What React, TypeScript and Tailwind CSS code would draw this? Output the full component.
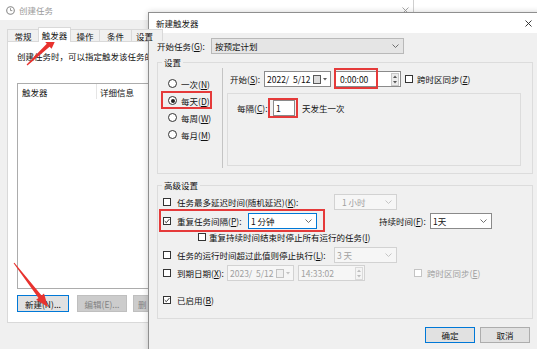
import React from "react";

function U({ children }: { children: React.ReactNode }) {
  return <span className="underline underline-offset-[1px]">{children}</span>;
}

function Check({ checked = false, disabled = false }: { checked?: boolean; disabled?: boolean }) {
  return (
    <span
      className={`relative block w-[8px] h-[8px] shrink-0 border bg-white ${
        disabled ? "border-[#c4c4c4]" : "border-[#333333]"
      }`}
    >
      {checked && (
        <svg className="absolute left-0 top-0" width="6" height="6" viewBox="0 0 6 6">
          <path d="M0.7 3.1 L2.3 4.7 L5.4 1.1" stroke="#222" strokeWidth="0.9" fill="none" />
        </svg>
      )}
    </span>
  );
}

function Radio({ checked = false }: { checked?: boolean }) {
  return (
    <span className="flex w-[9px] h-[9px] shrink-0 rounded-full border border-[#333333] bg-white items-center justify-center">
      {checked && <span className="block w-[4px] h-[4px] rounded-full bg-[#222]" />}
    </span>
  );
}

function Chevron({ color = "#606060" }: { color?: string }) {
  return (
    <svg width="7" height="4" viewBox="0 0 7 4" className="shrink-0">
      <path d="M0.5 0.5 L3.5 3.5 L6.5 0.5" stroke={color} strokeWidth="0.9" fill="none" />
    </svg>
  );
}

function CalIcon({ disabled = false }: { disabled?: boolean }) {
  const s = disabled ? "#c2c2c2" : "#5a5a5a";
  return (
    <svg width="15" height="9" viewBox="0 0 15 9" className="shrink-0">
      <rect x="0.5" y="0.5" width="7" height="8" fill={disabled ? "#f0f0f0" : "#dcdcdc"} stroke={s} />
      <path d="M10 3 L14 3 L12 5.5 Z" fill={s} />
    </svg>
  );
}

function Spinner({ disabled = false }: { disabled?: boolean }) {
  const s = disabled ? "#bdbdbd" : "#555";
  return (
    <svg width="8" height="13" viewBox="0 0 8 13" className="shrink-0">
      <rect x="0.5" y="0.5" width="7" height="12" fill={disabled ? "#f4f4f4" : "#ececec"} stroke={disabled ? "#dadada" : "#c8c8c8"} />
      <path d="M2 5 L6 5 L4 2.5 Z" fill={s} />
      <path d="M2 8 L6 8 L4 10.5 Z" fill={s} />
    </svg>
  );
}

function RedBox({ className }: { className: string }) {
  return <span className={`absolute border-2 border-[#e53a3a] pointer-events-none ${className}`} />;
}

function BackgroundWindow() {
  return (
    <div className="flex flex-col h-full">
      <div className="h-[20px] bg-white flex shrink-0">
        <div className="w-[414px] h-full border-r border-[#cfcfcf] flex items-center pl-[6px]">
          <svg width="9" height="9" viewBox="0 0 9 9">
            <circle cx="4.5" cy="4.5" r="3.8" fill="#fff" stroke="#8a8a8a" strokeWidth="1.1" />
            <path d="M4.5 2.2 L4.5 4.6 L6.3 4.6" stroke="#8a8a8a" strokeWidth="0.9" fill="none" />
          </svg>
          <span className="ml-[4px] text-[#9b9b9b]">创建任务</span>
          <svg width="7" height="7" viewBox="0 0 7 7" className="ml-auto mr-[4px]">
            <path d="M0.5 0.5 L6.5 6.5 M6.5 0.5 L0.5 6.5" stroke="#9b9b9b" strokeWidth="0.9" />
          </svg>
        </div>
      </div>
      <div className="flex-1 pl-[7px] pt-[7px]">
        <div className="relative z-10 flex items-end h-[15px]">
          <div className="w-[31px] h-[12px] mb-[1px] border-t border-l border-[#d9d9d9] bg-[#f0f0f0] flex items-center justify-center">常规</div>
          <div className="w-[33px] h-[15px] border-t border-l border-r border-[#d9d9d9] bg-white flex items-start pt-[1px] justify-center">触发器</div>
          <div className="w-[29px] h-[12px] mb-[1px] border-t border-r border-[#d9d9d9] bg-[#f0f0f0] flex items-center justify-center">操作</div>
          <div className="w-[32px] h-[12px] mb-[1px] border-t border-r border-[#d9d9d9] bg-[#f0f0f0] flex items-center justify-center">条件</div>
          <div className="w-[31px] h-[12px] mb-[1px] border-t border-r border-[#d9d9d9] bg-[#f0f0f0] flex items-center justify-start pl-[4px] overflow-hidden">设置</div>
        </div>
        <div className="-mt-[1px] w-[400px] h-[282px] bg-white border border-[#d9d9d9] pl-[9px] pt-[8px] flex flex-col">
          <div className="w-[131px] overflow-hidden whitespace-nowrap">创建任务时，可以指定触发该任务的条件。</div>
          <div className="mt-[21px] w-[380px] h-[206px] border border-[#acacac] bg-white">
            <div className="flex h-[15px]">
              <div className="w-[79px] border-r border-[#e5e5e5] pl-[4px] flex items-center">触发器</div>
              <div className="pl-[3px] flex items-center">详细信息</div>
            </div>
          </div>
          <div className="mt-[6px] flex">
            <div className="w-[52px] h-[17px] border border-[#0078d7] bg-[#e1e1e1] flex items-center justify-center">新建(N)...</div>
            <div className="ml-[8px] w-[50px] h-[17px] border border-[#bfbfbf] bg-[#cccccc] text-[#838383] flex items-center justify-center">编辑(E)...</div>
            <div className="ml-[6px] w-[16px] h-[17px] border-t border-b border-l border-[#bfbfbf] bg-[#cccccc] text-[#838383] flex items-center pl-[4px] overflow-hidden">删</div>
          </div>
        </div>
      </div>
    </div>
  );
}

function Dialog() {
  return (
    <div className="absolute left-[148px] top-[12px] w-[393px] h-[345px] border border-[#8f8f8f] bg-[#f0f0f0] shadow-[0_0_6px_rgba(0,0,0,0.18)] flex flex-col">
      <div className="h-[20px] bg-white flex items-center pl-[7px] shrink-0">
        <span>新建触发器</span>
        <span className="ml-auto w-[24px] flex items-center justify-center">
          <svg width="7" height="7" viewBox="0 0 7 7">
            <path d="M0.5 0.5 L6.5 6.5 M6.5 0.5 L0.5 6.5" stroke="#222" strokeWidth="0.9" />
          </svg>
        </span>
      </div>
      <div className="pl-[8px] pr-[7px] flex flex-col">
        <div className="mt-[5px] h-[16px] flex items-center">
          <span className="w-[54px] whitespace-nowrap">开始任务(<U>G</U>):</span>
          <div className="w-[193px] h-[16px] border border-[#b9b9b9] bg-[#e5e5e5] flex items-center pl-[3px] pr-[4px]">
            <span className="flex-1">按预定计划</span>
            <Chevron />
          </div>
        </div>

        <fieldset className="mt-[3px] w-[376px] border border-[#dcdcdc]">
          <legend className="ml-[4px] px-[2px] leading-[10px]">设置</legend>
          <div className="mt-[1px] mb-[5px] h-[100px] flex">
            <div className="w-[64px] pt-[7px] flex flex-col">
              <div className="h-[17px] flex items-center pl-[10px]">
                <Radio />
                <span className="ml-[4px]">一次(<U>N</U>)</span>
              </div>
              <div className="relative h-[17px] flex items-center pl-[10px]">
                <Radio checked />
                <span className="ml-[4px]">每天(<U>D</U>)</span>
                <RedBox className="left-[3px] -top-[1px] w-[51px] h-[18px]" />
              </div>
              <div className="h-[17px] flex items-center pl-[10px]">
                <Radio />
                <span className="ml-[4px]">每周(<U>W</U>)</span>
              </div>
              <div className="h-[17px] flex items-center pl-[10px]">
                <Radio />
                <span className="ml-[4px]">每月(<U>M</U>)</span>
              </div>
            </div>
            <div className="flex-1 border-l border-[#c4c4c4] flex flex-col">
              <div className="mt-[3px] h-[16px] flex items-center pl-[7px]">
                <span className="w-[34px] whitespace-nowrap">开始(<U>S</U>):</span>
                <div className="w-[67px] h-[16px] border border-[#8a8a8a] bg-white flex items-center pl-[2px] pr-[2px]">
                  <span className="flex-1 whitespace-pre">2022/  5/12</span>
                  <CalIcon />
                </div>
                <div className="relative ml-[3px] w-[67px] h-[16px] border border-[#8a8a8a] bg-white flex items-center pl-[5px] pr-[1px]">
                  <span className="flex-1">0:00:00</span>
                  <Spinner />
                  <RedBox className="-left-[1px] -top-[4px] w-[44px] h-[21px]" />
                </div>
                <span className="ml-[4px]">
                  <Check />
                </span>
                <span className="ml-[4px] whitespace-nowrap">跨时区同步(<U>Z</U>)</span>
              </div>
              <div className="mt-[6px] ml-[4px] w-[294px] h-[73px] border border-[#dcdcdc] pt-[6px] pl-[9px]">
                <div className="h-[16px] flex items-center">
                  <span className="w-[36px] whitespace-nowrap">每隔(<U>C</U>):</span>
                  <div className="relative w-[22px] h-[16px] border border-[#8a8a8a] bg-white flex items-center pl-[2px]">
                    1
                    <RedBox className="-left-[6px] -top-[3px] w-[30px] h-[20px]" />
                  </div>
                  <span className="ml-[7px]">天发生一次</span>
                </div>
              </div>
            </div>
          </div>
        </fieldset>

        <fieldset className="mt-[6px] w-[376px] border border-[#dcdcdc]">
          <legend className="ml-[4px] px-[2px] leading-[10px]">高级设置</legend>
          <div className="mt-[4px] mb-[10px] flex flex-col">
            <div className="h-[16px] flex items-center pl-[5px]">
              <Check />
              <span className="ml-[6px] w-[157px] whitespace-nowrap">任务最多延迟时间(随机延迟)(<U>K</U>):</span>
              <div className="w-[63px] h-[16px] border border-[#d2d2d2] bg-[#f6f6f6] text-[#a0a0a0] flex items-center pl-[7px] pr-[4px]">
                <span className="flex-1">1 小时</span>
                <Chevron color="#c0c0c0" />
              </div>
            </div>
            <div className="relative mt-[3px] h-[16px] flex items-center pl-[5px]">
              <Check checked />
              <span className="ml-[6px] w-[71px] whitespace-nowrap">重复任务间隔(<U>P</U>):</span>
              <div className="w-[69px] h-[16px] border border-[#0078d7] bg-white flex items-center pl-[2px] pr-[4px]">
                <span className="flex-1">1 分钟</span>
                <Chevron />
              </div>
              <span className="ml-[62px] w-[51px] whitespace-nowrap">持续时间(<U>F</U>):</span>
              <div className="w-[62px] h-[16px] border border-[#8a8a8a] bg-white flex items-center pl-[2px] pr-[4px]">
                <span className="flex-1">1天</span>
                <Chevron />
              </div>
              <RedBox className="left-[1px] -top-[4px] w-[166px] h-[23px]" />
            </div>
            <div className="h-[16px] flex items-center pl-[40px]">
              <Check />
              <span className="ml-[3px] whitespace-nowrap">重复持续时间结束时停止所有运行的任务(<U>I</U>)</span>
            </div>
            <div className="mt-[2px] h-[16px] flex items-center pl-[5px]">
              <Check />
              <span className="ml-[6px] w-[157px] whitespace-nowrap">任务的运行时间超过此值则停止执行(<U>L</U>):</span>
              <div className="w-[63px] h-[16px] border border-[#d2d2d2] bg-[#f6f6f6] text-[#a0a0a0] flex items-center pl-[2px] pr-[4px]">
                <span className="flex-1">3 天</span>
                <Chevron color="#c0c0c0" />
              </div>
            </div>
            <div className="mt-[2px] h-[16px] flex items-center pl-[5px]">
              <Check />
              <span className="ml-[6px] w-[50px] whitespace-nowrap">到期日期(<U>X</U>):</span>
              <div className="w-[67px] h-[16px] border border-[#d2d2d2] bg-[#f6f6f6] text-[#a0a0a0] flex items-center pl-[2px] pr-[2px]">
                <span className="flex-1 whitespace-pre">2023/  5/12</span>
                <CalIcon disabled />
              </div>
              <div className="ml-[4px] w-[67px] h-[16px] border border-[#d2d2d2] bg-[#f6f6f6] text-[#a0a0a0] flex items-center pl-[2px] pr-[1px]">
                <span className="flex-1">14:33:02</span>
                <Spinner disabled />
              </div>
              <span className="ml-[49px]">
                <Check disabled />
              </span>
              <span className="ml-[5px] text-[#a0a0a0] whitespace-nowrap">跨时区同步(<U>E</U>)</span>
            </div>
            <div className="mt-[11px] h-[16px] flex items-center pl-[5px]">
              <Check checked />
              <span className="ml-[6px]">已启用(<U>B</U>)</span>
            </div>
          </div>
        </fieldset>

        <div className="mt-[8px] mr-[3px] flex justify-end">
          <div className="w-[50px] h-[16px] border border-[#0078d7] bg-[#e1e1e1] flex items-center justify-center">确定</div>
          <div className="ml-[5px] w-[50px] h-[16px] border border-[#adadad] bg-[#e1e1e1] flex items-center justify-center">取消</div>
        </div>
      </div>
    </div>
  );
}

function Arrows() {
  return (
    <svg className="absolute left-0 top-0 pointer-events-none" width="537" height="349" viewBox="0 0 537 349">
      <polygon
        fill="#e8322e"
        points="57,37 51.6,48.8 49.6,46.7 27.4,65.5 26.6,64.5 46.8,43.7 44.8,41.5"
      />
      <polygon
        fill="#e8322e"
        points="48,307 36.1,299.8 38.5,297.9 13.6,263.3 14.4,262.7 41.6,295.5 44.0,293.6"
      />
    </svg>
  );
}

export default function App() {
  return (
    <div className="relative w-[537px] h-[349px] overflow-hidden bg-[#f0f0f0] font-['Noto_Sans_CJK_SC',sans-serif] text-[8.5px] leading-[12px] text-[#111]">
      <BackgroundWindow />
      <Dialog />
      <Arrows />
    </div>
  );
}
